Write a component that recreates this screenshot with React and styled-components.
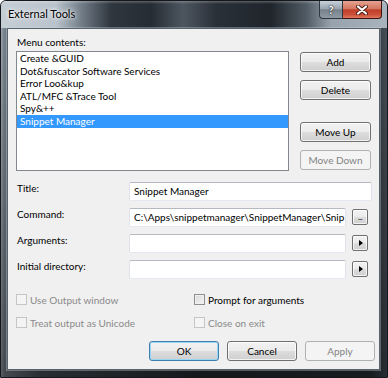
import styled, { createGlobalStyle, css } from 'styled-components';

const GlobalStyle = createGlobalStyle`
  html, body {
    margin: 0;
    padding: 0;
    background: #ffffff;
  }
  body {
    font-family: Lato, "Open Sans", sans-serif;
    font-size: 10px;
    color: #000;
  }
  * {
    box-sizing: border-box;
  }
`;

const Window = styled.div`
  width: 388px;
  height: 378px;
  display: flex;
  flex-direction: column;
  border: 1px solid #14181c;
  border-radius: 6px 6px 0 0;
  overflow: hidden;
  background:
    linear-gradient(180deg, rgba(0, 0, 0, 0) 0%, rgba(0, 0, 0, 0.45) 100%),
    linear-gradient(90deg, #a3adb7 0px, #7a858f 3px, #4a525a 40px, #262c32 200px, #2b3238 370px, #4a525a 100%);
`;

const TitleBar = styled.div`
  height: 27px;
  display: flex;
  align-items: flex-start;
  background:
    linear-gradient(180deg, rgba(255, 255, 255, 0.25) 0px, rgba(255, 255, 255, 0) 3px),
    linear-gradient(90deg, #c5cdd5 0px, #bac3cc 55px, #737e89 80px, #2f363e 110px, #262c33 150px,
      #4d5660 182px, #2a3038 215px, #1f252b 270px, #505a64 305px, #97a2ad 330px, #a9b3bd 100%);
`;

const Title = styled.div`
  padding-left: 7px;
  line-height: 25px;
  font-size: 11px;
  color: #000;
  text-shadow: 0 0 6px #fff, 0 0 3px #fff;
`;

const Caption = styled.div`
  margin-left: auto;
  margin-right: 5px;
  display: flex;
  height: 18px;
`;

const CaptionButton = styled.div`
  display: flex;
  align-items: center;
  justify-content: center;
  height: 18px;
  width: ${p => p.$w}px;
  border: 1px solid #2f353c;
  border-top: none;
  color: #fff;
  font-weight: 700;
  font-size: 11px;
  text-shadow: 0 0 2px #222, 0 0 1px #000;
  ${p => p.$close
    ? css`
      border-left: none;
      border-radius: 0 0 4px 0;
      border-color: #3a1510;
      background: linear-gradient(180deg, #e6a291 0%, #d37862 45%, #c13f2a 52%, #cd4f39 80%, #e07a5e 100%);
    `
    : css`
      border-radius: 0 0 0 4px;
      background: linear-gradient(180deg, #c9d1d9 0%, #9aa5b0 45%, #76818c 52%, #8f9aa5 100%);
    `}
`;

const Client = styled.div`
  flex: 1;
  margin: 0 7px 7px 6px;
  background: #f0f0f0;
  border: 1px solid #59626b;
  box-shadow: 0 0 0 1px rgba(210, 218, 226, 0.35);
  padding: 6px 0 0 8px;
  display: flex;
  flex-direction: column;
`;

const TopGrid = styled.div`
  display: grid;
  grid-template-columns: 273px 71px;
  grid-template-rows: 16px 120px;
  column-gap: 11px;
`;

const GroupLabel = styled.div`
  line-height: 14px;
  padding-left: 1px;
`;

const List = styled.ul`
  margin: 0;
  padding: 0;
  list-style: none;
  grid-column: 1;
  grid-row: 2;
  height: 120px;
  border: 1px solid #828790;
  background: #fff;
`;

const ListItem = styled.li`
  height: 12.6px;
  line-height: 12.6px;
  padding-left: 3px;
  white-space: nowrap;
  ${p => p.$selected && css`
    background: #3399ff;
    color: #fff;
  `}
`;

const ButtonStack = styled.div`
  grid-column: 2;
  grid-row: 2;
  display: flex;
  flex-direction: column;
  padding-top: 1px;
`;

const Button = styled.button`
  width: ${p => p.$w || 71}px;
  height: 20px;
  margin-top: ${p => p.$gap || 0}px;
  padding: 0;
  font: inherit;
  color: #000;
  border: 1px solid #707070;
  border-radius: 3px;
  background: linear-gradient(180deg, #f2f2f2 0%, #ebebeb 50%, #dddddd 51%, #cfcfcf 100%);
  box-shadow: inset 0 0 0 1px rgba(255, 255, 255, 0.75);
  ${p => p.$default && css`
    border-color: #3c7fb1;
    box-shadow: inset 0 0 0 1px #9ad6f4;
  `}
  &:disabled {
    border-color: #adb2b5;
    background: #f4f4f4;
    color: #838383;
    box-shadow: none;
  }
`;

const Form = styled.div`
  display: grid;
  grid-template-columns: 112px auto;
  row-gap: 7px;
  margin-top: 11px;
  padding-left: 1px;
`;

const FormLabel = styled.div`
  line-height: 13px;
`;

const Control = styled.div`
  display: flex;
  gap: 6px;
`;

const TextBox = styled.div`
  width: ${p => p.$w}px;
  height: 19px;
  padding: 0 3px 0 4px;
  line-height: 17px;
  white-space: nowrap;
  overflow: hidden;
  background: #fff;
  border: 1px solid;
  border-color: #b5b9c0 #dfe2e8 #e3e9ef #dfe2e8;
  border-radius: 2px;
`;

const SmallButton = styled.div`
  width: 16px;
  height: 16px;
  margin-top: 1px;
  display: flex;
  align-items: center;
  justify-content: center;
  overflow: hidden;
  border: 1px solid #707070;
  border-radius: 2px;
  background: linear-gradient(180deg, #f2f2f2 0%, #ebebeb 50%, #dddddd 51%, #cfcfcf 100%);
  box-shadow: inset 0 0 0 1px rgba(255, 255, 255, 0.75);
  font-size: 8px;
  line-height: 8px;
  letter-spacing: -0.5px;
`;

const Arrow = styled.span`
  width: 0;
  height: 0;
  margin-left: 1px;
  border-left: 4px solid #000;
  border-top: 3.5px solid transparent;
  border-bottom: 3.5px solid transparent;
`;

const Checks = styled.div`
  display: grid;
  grid-template-columns: 178px auto;
  row-gap: 12px;
  margin-top: 15px;
`;

const Check = styled.div`
  display: flex;
  align-items: center;
  gap: 3px;
  height: 11px;
  color: ${p => (p.$disabled ? '#8a8a8a' : '#000')};
`;

const Box = styled.span`
  width: 11px;
  height: 11px;
  flex: none;
  border: 1px solid ${p => (p.$disabled ? '#c5c5c5' : '#8e8f8f')};
  background: ${p => (p.$disabled
    ? '#f4f4f4'
    : 'linear-gradient(135deg, #d8d8d8 0%, #f6f6f6 100%)')};
  box-shadow: inset 0 0 0 1px ${p => (p.$disabled ? '#f4f4f4' : '#f0f0f0')};
`;

const Footer = styled.div`
  display: flex;
  justify-content: flex-end;
  gap: 8px;
  margin-top: 13px;
  padding-right: 4px;
`;

const tools = [
  'Create &GUID',
  'Dot&fuscator Software Services',
  'Error Loo&kup',
  'ATL/MFC &Trace Tool',
  'Spy&++',
  'Snippet Manager',
];

const CloseGlyph = () => (
  <svg width="12" height="10" viewBox="0 0 12 10">
    <path d="M2 1.5 L10 8.5 M10 1.5 L2 8.5" stroke="#4a1a12" strokeWidth="4" strokeLinecap="round" />
    <path d="M2 1.5 L10 8.5 M10 1.5 L2 8.5" stroke="#ffffff" strokeWidth="2.2" strokeLinecap="round" />
  </svg>
);

export default function App() {
  return (
    <>
      <GlobalStyle />
      <Window>
        <TitleBar>
          <Title>External Tools</Title>
          <Caption>
            <CaptionButton $w={24}>?</CaptionButton>
            <CaptionButton $w={39} $close>
              <CloseGlyph />
            </CaptionButton>
          </Caption>
        </TitleBar>

        <Client>
          <TopGrid>
            <GroupLabel>Menu contents:</GroupLabel>
            <List>
              {tools.map((t, i) => (
                <ListItem key={t} $selected={i === tools.length - 1}>{t}</ListItem>
              ))}
            </List>
            <ButtonStack>
              <Button>Add</Button>
              <Button $gap={8}>Delete</Button>
              <Button $gap={22}>Move Up</Button>
              <Button $gap={8} disabled>Move Down</Button>
            </ButtonStack>
          </TopGrid>

          <Form>
            <FormLabel>Title:</FormLabel>
            <Control>
              <TextBox $w={243}>Snippet Manager</TextBox>
            </Control>
            <FormLabel>Command:</FormLabel>
            <Control>
              <TextBox $w={217}>C:\Apps\snippetmanager\SnippetManager\Snip</TextBox>
              <SmallButton>...</SmallButton>
            </Control>
            <FormLabel>Arguments:</FormLabel>
            <Control>
              <TextBox $w={217} />
              <SmallButton><Arrow /></SmallButton>
            </Control>
            <FormLabel>Initial directory:</FormLabel>
            <Control>
              <TextBox $w={217} />
              <SmallButton><Arrow /></SmallButton>
            </Control>
          </Form>

          <Checks>
            <Check $disabled><Box $disabled />Use Output window</Check>
            <Check><Box />Prompt for arguments</Check>
            <Check $disabled><Box $disabled />Treat output as Unicode</Check>
            <Check $disabled><Box $disabled />Close on exit</Check>
          </Checks>

          <Footer>
            <Button $w={70} $default>OK</Button>
            <Button $w={70}>Cancel</Button>
            <Button $w={70} disabled>Apply</Button>
          </Footer>
        </Client>
      </Window>
    </>
  );
}
